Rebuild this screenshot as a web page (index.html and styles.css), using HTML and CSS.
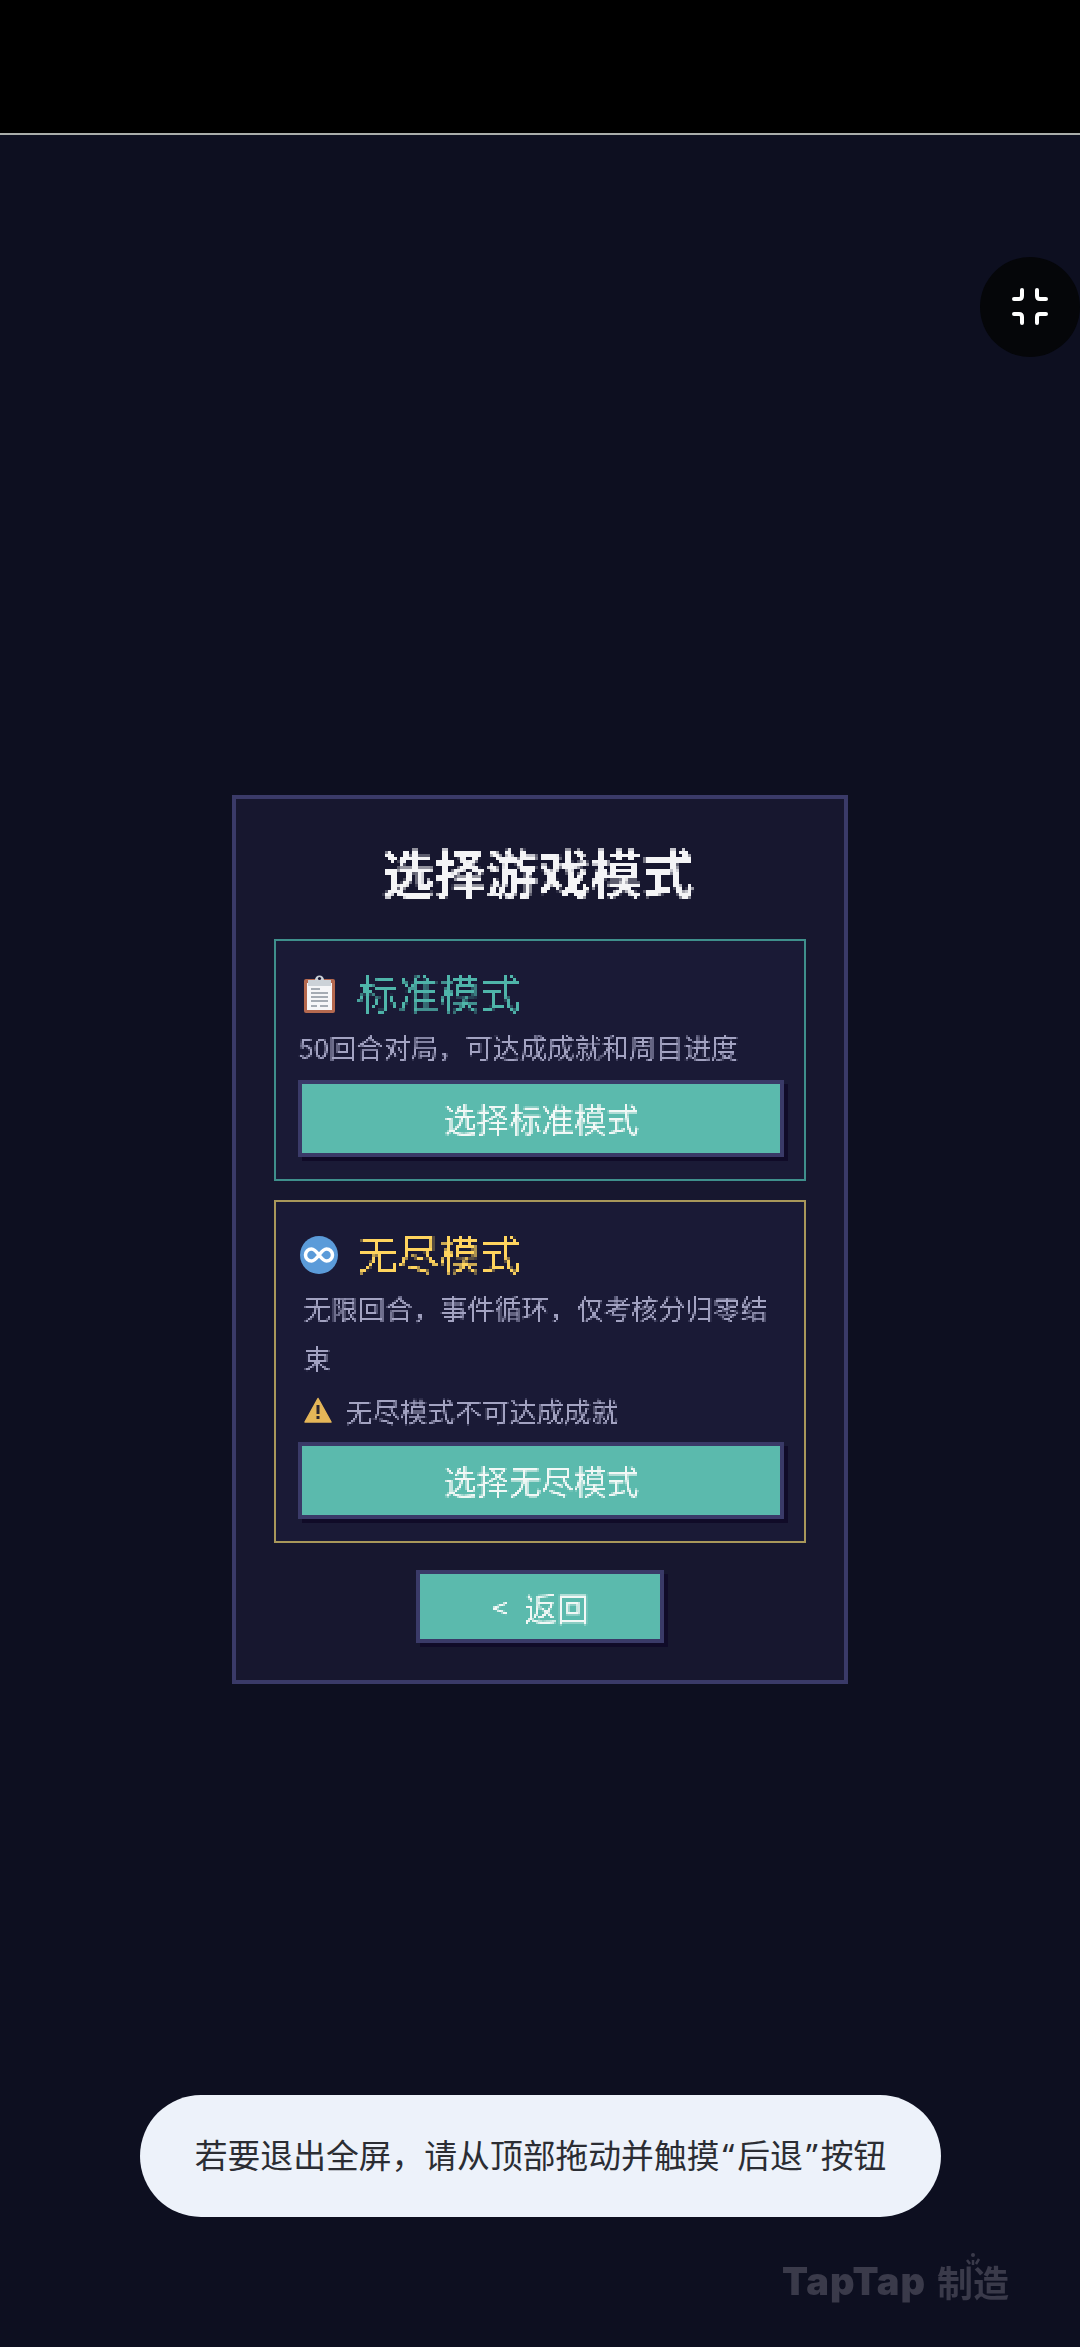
FILE: index.html
```html
<!DOCTYPE html>
<html lang="zh-CN">
<head>
    <meta charset="UTF-8">
    <meta name="viewport" content="width=device-width, initial-scale=1.0">
    <title>选择游戏模式</title>
    <link rel="stylesheet" href="styles.css">
</head>
<body>
    <div class="top-bar"></div>

    <div class="stage">
        <div class="modal">
            <div class="modal-title">选择游戏模式</div>

            <div class="mode-card mode-standard">
                <div class="mode-head">
                    <svg class="mode-icon" viewBox="0 0 38 38" width="38" height="38">
                        <rect x="4" y="4" width="31" height="34" rx="2" fill="#b5694f"/>
                        <rect x="7" y="8" width="25" height="27" fill="#f6f6f8"/>
                        <path d="M8 5h7a4 4 0 0 1 9 0h7v6H8z" fill="#ccd2d8"/>
                        <circle cx="19.500" cy="3.500" r="1.600" fill="#1a1a36"/>
                        <path d="M11 14h9M11 18h17M11 22h17M11 26h17M11 31h6M20 31h8" stroke="#8a929c" stroke-width="1.600"/>
                    </svg>
                    <span class="mode-name">标准模式</span>
                </div>
                <div class="mode-desc">50回合对局，可达成成就和周目进度</div>
                <div class="pixel-btn"><span class="btn-text">选择标准模式</span></div>
            </div>

            <div class="mode-card mode-endless">
                <div class="mode-head">
                    <svg class="mode-icon" viewBox="0 0 38 38" width="38" height="38">
                        <circle cx="19" cy="19" r="19" fill="#5b9bd9"/>
                        <path d="M19 19c-3-4-5-6-7.500-6a6 6 0 0 0 0 12c2.500 0 4.500-2 7.500-6s5-6 7.500-6a6 6 0 0 1 0 12c-2.500 0-4.500-2-7.500-6z" fill="none" stroke="#fff" stroke-width="3.500"/>
                    </svg>
                    <span class="mode-name">无尽模式</span>
                </div>
                <div class="mode-desc mode-desc-long">无限回合，事件循环，仅考核分归零结束</div>
                <div class="mode-warn">
                    <svg class="warn-icon" viewBox="0 0 28 26" width="28" height="26">
                        <path d="M14 1.500 27 25H1z" fill="#e5b658" stroke="#e5b658" stroke-width="1.500" stroke-linejoin="round"/>
                        <path d="M14 8v9" stroke="#2a2430" stroke-width="3"/>
                        <rect x="12.500" y="19" width="3" height="3" fill="#2a2430"/>
                    </svg>
                    <span class="warn-text">无尽模式不可达成成就</span>
                </div>
                <div class="pixel-btn"><span class="btn-text">选择无尽模式</span></div>
            </div>

            <div class="pixel-btn back-btn">
                <span class="btn-text back-arrow">&lt;</span>
                <span class="btn-text">返回</span>
            </div>
        </div>
    </div>

    <div class="fullscreen-btn">
        <svg viewBox="0 0 100 100" width="100" height="100">
            <path d="M42 33v6q0 3-3 3h-5M57 33v6q0 3 3 3h6M34 57h5q3 0 3 3v6M66 57h-6q-3 0-3 3v6" fill="none" stroke="#fff" stroke-width="4" stroke-linecap="round"/>
        </svg>
    </div>

    <div class="toast">若要退出全屏，请从顶部拖动并触摸<span class="quote">“</span>后退<span class="quote">”</span>按钮</div>

    <div class="watermark">
        <span class="watermark-en">TapTap</span>
        <span class="watermark-cn">制造</span>
        <svg class="watermark-dots" viewBox="0 0 20 16" width="20" height="16">
            <circle cx="10" cy="3" r="2" fill="#3a3a4a"/>
            <path d="M4 8l3 4M16 7l-3 5M10 8v5" stroke="#3a3a4a" stroke-width="2.500"/>
        </svg>
    </div>

    <svg class="filter-defs" width="0" height="0">
        <filter id="pixel-large" x="0" y="0" width="100%" height="100%" color-interpolation-filters="sRGB">
            <feFlood x="1" y="1" width="1" height="1" flood-color="#000"/>
            <feComposite width="3" height="3"/>
            <feTile result="grid"/>
            <feComposite in="SourceGraphic" in2="grid" operator="in"/>
            <feMorphology operator="dilate" radius="1"/>
        </filter>
        <filter id="pixel-small" x="0" y="0" width="100%" height="100%" color-interpolation-filters="sRGB">
            <feFlood x="0" y="0" width="1" height="1" flood-color="#000"/>
            <feComposite width="2" height="2"/>
            <feTile result="grid"/>
            <feComposite in="SourceGraphic" in2="grid" operator="in" result="dots"/>
            <feOffset in="dots" dx="1" result="right"/>
            <feMerge result="wide">
                <feMergeNode in="dots"/>
                <feMergeNode in="right"/>
            </feMerge>
            <feOffset in="wide" dy="1" result="down"/>
            <feMerge>
                <feMergeNode in="wide"/>
                <feMergeNode in="down"/>
            </feMerge>
        </filter>
    </svg>
</body>
</html>
```

FILE: styles.css
```css
body {
    margin: 0;
    padding: 0;
    width: 1080px;
    height: 2347px;
    position: relative;
    overflow: hidden;
    display: flex;
    flex-direction: column;
    background-color: #0d0f20;
    font-family: "Noto Sans CJK SC", "Noto Sans", sans-serif;
}

.top-bar {
    height: 133px;
    background-color: #000;
    border-bottom: 2px solid #a9adaa;
}

.stage {
    flex: 1;
    display: flex;
    align-items: center;
    justify-content: center;
    padding-bottom: 3px;
}

.modal {
    width: 616px;
    box-sizing: border-box;
    padding: 40px 38px 37px;
    background-color: #17172f;
    border: 4px solid #3a3a68;
    display: flex;
    flex-direction: column;
}

.modal-title {
    font-size: 52px;
    line-height: 66px;
    font-weight: 700;
    text-align: center;
    color: #f4f4f6;
    margin-bottom: 34px;
    margin-right: 4px;
    filter: url(#pixel-large);
}

.mode-card {
    background-color: #1a1a36;
    border: 2px solid;
    padding: 28px 20px 22px 22px;
}

.mode-standard {
    border-color: #3f8f8c;
    margin-bottom: 19px;
}

.mode-endless {
    border-color: #a8975a;
}

.mode-head {
    display: flex;
    align-items: center;
    gap: 19px;
    height: 50px;
    padding-left: 2px;
}

.mode-icon {
    flex-shrink: 0;
}

.mode-name {
    font-size: 41px;
    line-height: 44px;
    margin-bottom: 6px;
    filter: url(#pixel-large);
}

.mode-standard .mode-name {
    color: #4fb5aa;
}

.mode-endless .mode-name {
    color: #ffd45e;
}

.mode-desc {
    font-size: 27.300px;
    line-height: 46px;
    padding-bottom: 4px;
    color: #a3a3c2;
    margin-top: 4px;
    margin-bottom: 7px;
    filter: url(#pixel-small);
}

.mode-desc-long {
    padding-left: 5px;
    padding-bottom: 0;
    line-height: 50px;
    margin-top: 2px;
    margin-bottom: 3px;
}

.mode-warn {
    display: flex;
    align-items: center;
    gap: 13px;
    height: 50px;
    margin-bottom: 7px;
    padding-left: 6px;
    font-size: 27.300px;
    color: #a3a3c2;
}

.warn-text {
    filter: url(#pixel-small);
}

.pixel-btn {
    height: 69px;
    line-height: 67px;
    text-align: center;
    font-size: 32.500px;
    color: #f2f8f6;
    background-color: #5bbaad;
    border: 4px solid #3a3a68;
    box-shadow: 4px 4px 0 #100b28;
}

.btn-text {
    display: inline-block;
    filter: url(#pixel-small);
}

.back-btn {
    width: 240px;
    height: 65px;
    line-height: 65px;
    margin: 27px auto 0;
    display: flex;
    justify-content: center;
    gap: 16px;
}

.back-arrow {
    font-size: 30px;
}

.fullscreen-btn {
    position: absolute;
    left: 980px;
    top: 257px;
    width: 100px;
    height: 100px;
    border-radius: 50%;
    background-color: #050609;
}

.toast {
    position: absolute;
    left: 140px;
    top: 2095px;
    width: 801px;
    height: 122px;
    border-radius: 61px;
    background-color: #edf2fa;
    color: #2b2d33;
    font-size: 32.800px;
    line-height: 118px;
    text-align: center;
}

.quote {
    font-family: "Noto Sans", sans-serif;
    padding: 0 3px;
}

.watermark {
    position: absolute;
    left: 782px;
    top: 2258px;
    display: flex;
    align-items: center;
    gap: 11px;
    color: #3a3a4a;
    line-height: 46px;
    filter: blur(0.7px);
}

.watermark-en {
    font-family: "Inter", sans-serif;
    font-size: 38px;
    font-weight: 900;
    letter-spacing: 1px;
}

.watermark-cn {
    font-size: 36px;
    font-weight: 700;
}

.watermark-dots {
    position: absolute;
    right: 26px;
    top: -6px;
}

.filter-defs {
    position: absolute;
}
```
